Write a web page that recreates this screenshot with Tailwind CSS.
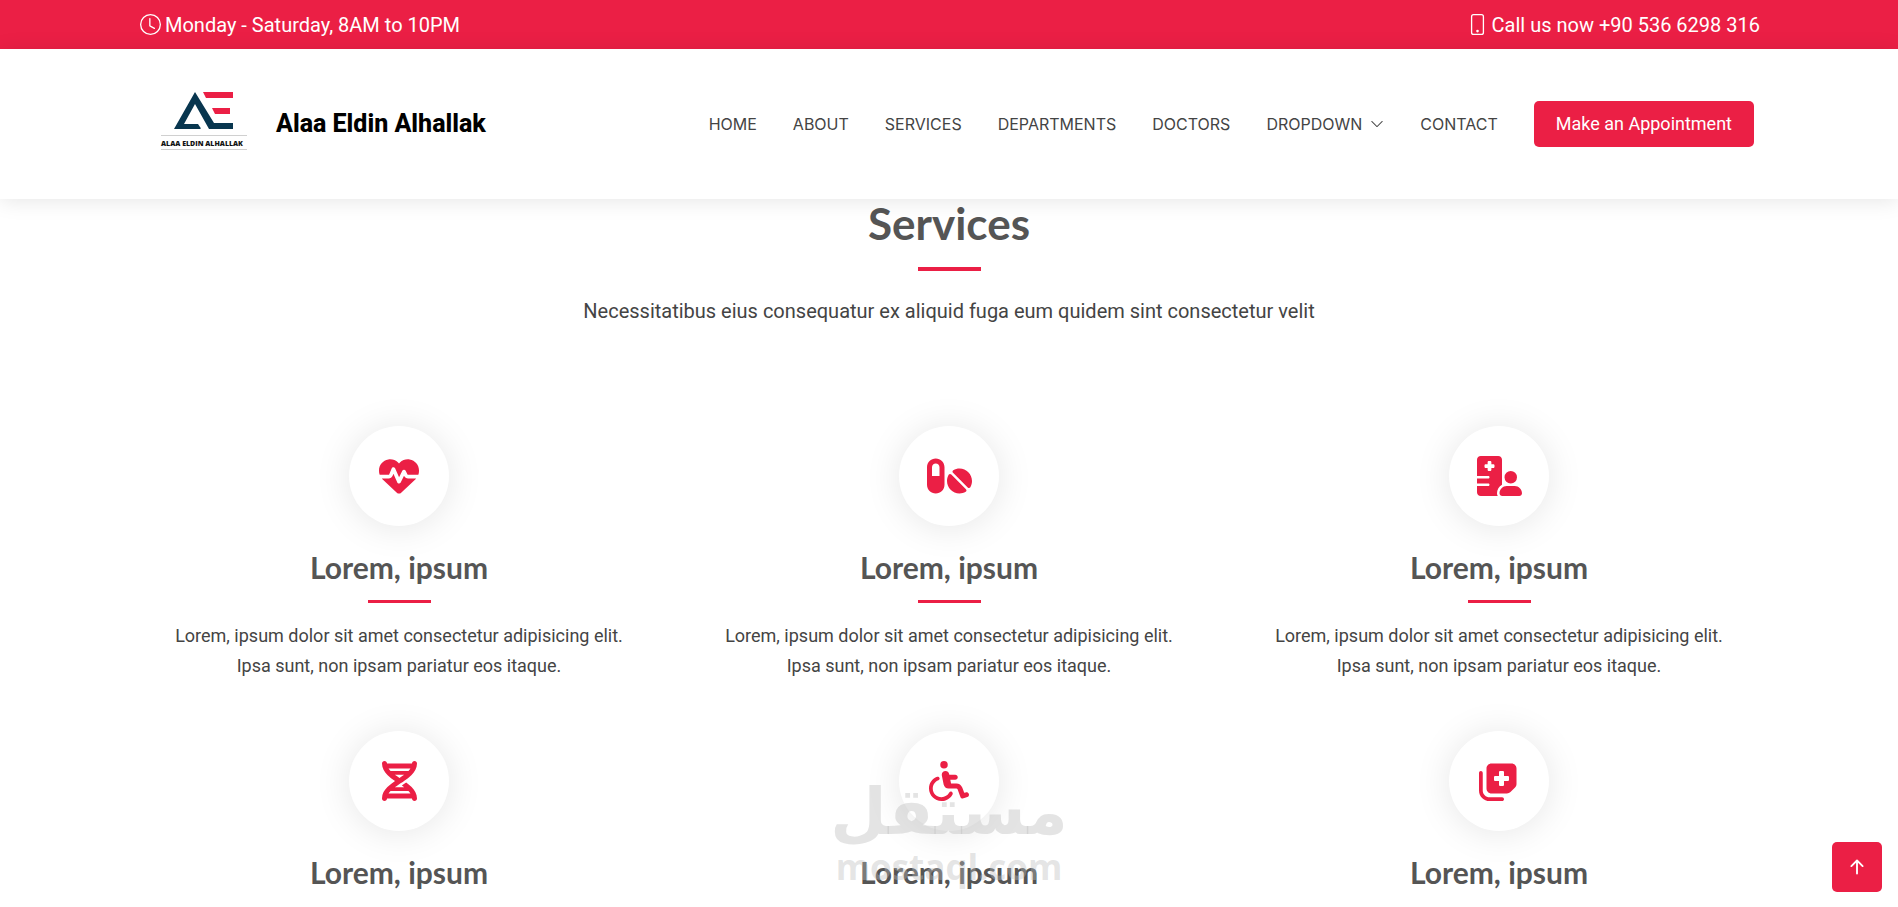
<!DOCTYPE html>
<html lang="en">
<head>
  <meta charset="UTF-8" />
  <title>Alaa Eldin Alhallak</title>
  <meta name="viewport" content="width=device-width, initial-scale=1.0" />
  <script src="https://cdn.jsdelivr.net/npm/@tailwindcss/browser@4"></script>
</head>
<body class="relative h-screen overflow-hidden bg-white font-['Roboto',sans-serif] text-[#444444]">

  <!-- Top bar -->
  <div class="bg-[#eb1f45] text-white text-xl">
    <div class="max-w-[1650px] mx-auto pl-4 pr-[14px] h-[49px] flex items-center justify-between">
      <div class="flex items-center gap-1">
        <svg class="size-[21px]" viewBox="0 0 16 16" fill="currentColor"><path d="M8 3.5a.5.5 0 0 0-1 0V9a.5.5 0 0 0 .252.434l3.5 2a.5.5 0 0 0 .496-.868L8 8.71z"/><path d="M8 16A8 8 0 1 0 8 0a8 8 0 0 0 0 16m7-8A7 7 0 1 1 1 8a7 7 0 0 1 14 0"/></svg>
        <span>Monday - Saturday, 8AM to 10PM</span>
      </div>
      <div class="flex items-center gap-1">
        <svg class="size-[21px]" viewBox="0 0 16 16" fill="currentColor"><path d="M11 1a1 1 0 0 1 1 1v12a1 1 0 0 1-1 1H5a1 1 0 0 1-1-1V2a1 1 0 0 1 1-1zM5 0a2 2 0 0 0-2 2v12a2 2 0 0 0 2 2h6a2 2 0 0 0 2-2V2a2 2 0 0 0-2-2z"/><path d="M8 14a1 1 0 1 0 0-2 1 1 0 0 0 0 2"/></svg>
        <span>Call us now +90 536 6298 316</span>
      </div>
    </div>
  </div>

  <!-- Header -->
  <header class="relative z-10 bg-white shadow-[0_2px_20px_rgba(0,0,0,0.1)]">
    <div class="max-w-[1650px] mx-auto pl-9 pr-5 h-[150px] flex items-center justify-between">
      <a href="#" class="flex items-center gap-7">
        <svg class="w-[88px] h-[66px]" viewBox="0 0 88 66">
          <path fill="#08364f" d="M35 1L14 38h26c1 0 1-1 0-2l-2-3H24l11-20 14 25h24v-6H54z"/>
          <path fill="#eb1f45" d="M43 1h30v6H46zM52 17h18v6H55z"/>
          <path stroke="#d0d0d0" d="M1 44.5h86M1 58.5h86"/>
          <text x="1" y="55" font-family="Open Sans, sans-serif" font-weight="800" font-size="7" fill="#111111">ALAA ELDIN ALHALLAK</text>
        </svg>
        <h1 class="text-[25px] font-extrabold text-black">Alaa Eldin Alhallak</h1>
      </a>
      <nav class="flex items-center gap-9 font-['Inter',sans-serif] text-base">
        <a href="#">HOME</a>
        <a href="#">ABOUT</a>
        <a href="#">SERVICES</a>
        <a href="#">DEPARTMENTS</a>
        <a href="#">DOCTORS</a>
        <a href="#" class="flex items-center gap-2">DROPDOWN
          <svg class="size-[14px]" viewBox="0 0 16 16" fill="currentColor"><path d="M1.646 4.646a.5.5 0 0 1 .708 0L8 10.293l5.646-5.647a.5.5 0 0 1 .708.708l-6 6a.5.5 0 0 1-.708 0l-6-6a.5.5 0 0 1 0-.708"/></svg>
        </a>
        <a href="#">CONTACT</a>
        <a href="#" class="bg-[#eb1f45] text-white rounded-[5px] px-[22px] h-[46px] flex items-center font-['Roboto',sans-serif] text-lg">Make an Appointment</a>
      </nav>
    </div>
  </header>

  <!-- Services -->
  <main class="max-w-[1650px] mx-auto text-center">
    <h2 class="text-[44px] leading-12 font-bold text-[#555555] font-['Lato',sans-serif]">Services</h2>
    <div class="w-[63px] h-1 mx-auto mt-5 bg-[#eb1f45]"></div>
    <p class="mt-[25px] text-xl leading-[30px]">Necessitatibus eius consequatur ex aliquid fuga eum quidem sint consectetur velit</p>

    <div class="mt-[100px] grid grid-cols-3 gap-y-[50px]">
      <section>
        <div class="size-[100px] mx-auto rounded-full bg-white shadow-[0_2px_36px_rgba(0,0,0,0.1)] flex items-center justify-center text-[#eb1f45]">
          <svg class="h-10" viewBox="0 0 512 512" fill="currentColor"><path d="M228.3 469.1L47.6 300.4c-4.2-3.9-8.2-8.1-11.9-12.4h87c22.6 0 43-13.6 51.7-34.5l10.5-25.2 49.3 109.5c3.8 8.5 12.1 14 21.4 14.1s17.8-5 22-13.3L320 253.7l1.7 3.4c9.5 19 28.9 31 50.1 31H476.3c-3.7 4.3-7.7 8.5-11.9 12.4L283.7 469.1c-7.5 7-17.4 10.9-27.7 10.9s-20.2-3.9-27.7-10.9zM503.7 240h-132c-3 0-5.8-1.7-7.2-4.4l-23.2-46.3c-4.1-8.1-12.4-13.3-21.5-13.3s-17.4 5.1-21.5 13.3l-41.4 82.8L205.9 158.2c-3.9-8.7-12.7-14.3-22.2-14.1s-18.1 5.9-21.8 14.8l-31.8 76.3c-1.2 3-4.2 4.9-7.4 4.9H16c-2.6 0-5 .4-7.3 1.1C3 225.2 0 208.2 0 190.9v-5.8c0-69.9 50.5-129.5 119.4-141C165 36.5 211.4 51.4 244 84l12 12 12-12c32.6-32.6 79-47.5 124.6-39.9C461.5 55.6 512 115.2 512 185.1v5.8c0 16.9-2.8 33.5-8.3 49.1z"/></svg>
        </div>
        <h3 class="mt-[23px] text-3xl/9 font-bold text-[#555555] font-['Lato',sans-serif]">Lorem, ipsum</h3>
        <div class="w-[63px] h-[3px] mx-auto mt-[15px] bg-[#eb1f45]"></div>
        <p class="mt-[18px] text-lg leading-[30px]">Lorem, ipsum dolor sit amet consectetur adipisicing elit.<br />Ipsa sunt, non ipsam pariatur eos itaque.</p>
      </section>

      <section>
        <div class="size-[100px] mx-auto rounded-full bg-white shadow-[0_2px_36px_rgba(0,0,0,0.1)] flex items-center justify-center text-[#eb1f45]">
          <svg class="h-10" viewBox="0 0 576 512" fill="currentColor"><path d="M112 96c-26.5 0-48 21.5-48 48l0 112 96 0 0-112c0-26.5-21.5-48-48-48zM0 144C0 82.1 50.1 32 112 32s112 50.1 112 112l0 224c0 61.9-50.1 112-112 112S0 429.9 0 368L0 144zM554.9 399.4c-7.1 12.3-23.7 13.1-33.8 3.1L333.5 214.9c-10-10-9.3-26.7 3.1-33.8C360 167.7 387.1 160 416 160c88.4 0 160 71.6 160 160c0 28.9-7.7 56-21.1 79.4zm-59.5 59.5C472 472.3 444.9 480 416 480c-88.4 0-160-71.6-160-160c0-28.9 7.7-56 21.1-79.4c7.1-12.3 23.7-13.1 33.8-3.1L498.5 425.1c10 10 9.3 26.7-3.1 33.8z"/></svg>
        </div>
        <h3 class="mt-[23px] text-3xl/9 font-bold text-[#555555] font-['Lato',sans-serif]">Lorem, ipsum</h3>
        <div class="w-[63px] h-[3px] mx-auto mt-[15px] bg-[#eb1f45]"></div>
        <p class="mt-[18px] text-lg leading-[30px]">Lorem, ipsum dolor sit amet consectetur adipisicing elit.<br />Ipsa sunt, non ipsam pariatur eos itaque.</p>
      </section>

      <section>
        <div class="size-[100px] mx-auto rounded-full bg-white shadow-[0_2px_36px_rgba(0,0,0,0.1)] flex items-center justify-center text-[#eb1f45]">
          <svg class="h-10" viewBox="0 0 576 512" fill="currentColor"><path d="M48 0C21.5 0 0 21.5 0 48V256H144c8.8 0 16 7.2 16 16s-7.2 16-16 16H0v64H144c8.8 0 16 7.2 16 16s-7.2 16-16 16H0v80c0 26.5 21.5 48 48 48H265.9c-6.3-10.2-9.9-22.2-9.9-35.1c0-46.9 25.8-87.8 64-109.2V271.8 48c0-26.5-21.5-48-48-48H48zM152 64h16c8.8 0 16 7.2 16 16v24h24c8.8 0 16 7.2 16 16v16c0 8.8-7.2 16-16 16H184v24c0 8.8-7.2 16-16 16H152c-8.8 0-16-7.2-16-16V152H112c-8.8 0-16-7.2-16-16V120c0-8.8 7.2-16 16-16h24V80c0-8.8 7.2-16 16-16zM512 272a80 80 0 1 0 -160 0 80 80 0 1 0 160 0zM288 477.1c0 19.3 15.6 34.9 34.9 34.9H541.1c19.3 0 34.9-15.6 34.9-34.9c0-51.4-41.7-93.1-93.1-93.1H381.1c-51.4 0-93.1 41.7-93.1 93.1z"/></svg>
        </div>
        <h3 class="mt-[23px] text-3xl/9 font-bold text-[#555555] font-['Lato',sans-serif]">Lorem, ipsum</h3>
        <div class="w-[63px] h-[3px] mx-auto mt-[15px] bg-[#eb1f45]"></div>
        <p class="mt-[18px] text-lg leading-[30px]">Lorem, ipsum dolor sit amet consectetur adipisicing elit.<br />Ipsa sunt, non ipsam pariatur eos itaque.</p>
      </section>

      <section>
        <div class="size-[100px] mx-auto rounded-full bg-white shadow-[0_2px_36px_rgba(0,0,0,0.1)] flex items-center justify-center text-[#eb1f45]">
          <svg class="h-10" viewBox="0 0 448 512" fill="currentColor"><path d="M416 0c17.7 0 32 14.3 32 32c0 59.8-30.3 107.5-69.4 146.6c-28 28-62.5 53.5-97.3 77.4l-2.5 1.7c-11.9 8.1-23.8 16.1-35.5 23.9l-1.6 1c-6 4-11.9 7.9-17.8 11.9c-20.9 14-40.8 27.7-59.3 41.5H283.3c-9.8-7.4-20.1-14.7-30.7-22.1l7-4.7 3-2c15.1-10.1 30.9-20.6 46.7-31.6c25 18.1 48.9 37.3 69.4 57.7C417.7 372.5 448 420.2 448 480c0 17.7-14.3 32-32 32s-32-14.3-32-32H64c0 17.7-14.3 32-32 32s-32-14.3-32-32c0-59.8 30.3-107.5 69.4-146.6c28-28 62.5-53.5 97.3-77.4c-34.8-23.9-69.3-49.3-97.3-77.4C30.3 139.5 0 91.8 0 32C0 14.3 14.3 0 32 0S64 14.3 64 32H384c0-17.7 14.3-32 32-32zM338.6 384H109.4c-10.1 10.6-18.6 21.3-25.5 32H364.1c-6.8-10.7-15.3-21.4-25.5-32zM109.4 128H338.6c10.1-10.7 18.6-21.3 25.5-32H83.9c6.8 10.7 15.3 21.3 25.5 32zm55.4 48c18.4 13.8 38.4 27.5 59.3 41.5c20.9-14 40.8-27.7 59.3-41.5H164.8z"/></svg>
        </div>
        <h3 class="mt-[23px] text-3xl/9 font-bold text-[#555555] font-['Lato',sans-serif]">Lorem, ipsum</h3>
      </section>

      <section>
        <div class="size-[100px] mx-auto rounded-full bg-white shadow-[0_2px_36px_rgba(0,0,0,0.1)] flex items-center justify-center text-[#eb1f45]">
          <svg class="h-10" viewBox="0 0 512 512" fill="currentColor"><path d="M192 96a48 48 0 1 0 0-96 48 48 0 1 0 0 96zM120.5 247.2c12.4-4.7 18.7-18.5 14-30.9s-18.5-18.7-30.9-14C43.1 225.1 0 283.5 0 352c0 88.4 71.6 160 160 160c61.2 0 114.3-34.3 141.2-84.7c6.2-11.7 1.8-26.2-9.9-32.5s-26.2-1.8-32.5 9.9C240 440 202.8 464 160 464C98.1 464 48 413.9 48 352c0-47.9 30.1-88.8 72.5-104.8zM259.8 176l-1.9-9.7c-4.5-22.3-24-38.3-46.8-38.3c-30.1 0-52.7 27.5-46.8 57l23.1 115.5c6 29.9 32.2 51.4 62.8 51.4h5.1c.4 0 .8 0 1.3 0h94.1c6.7 0 12.6 4.1 15 10.4L402 459.2c6 16.1 23.8 24.6 40.1 19.1l48-16c16.8-5.6 25.8-23.7 20.2-40.5s-23.7-25.8-40.5-20.2l-18.7 6.2-25.5-68c-11.7-31.2-41.6-51.9-74.9-51.9H282.2l-9.6-48H336c17.7 0 32-14.3 32-32s-14.3-32-32-32H259.8z"/></svg>
        </div>
        <h3 class="mt-[23px] text-3xl/9 font-bold text-[#555555] font-['Lato',sans-serif]">Lorem, ipsum</h3>
      </section>

      <section>
        <div class="size-[100px] mx-auto rounded-full bg-white shadow-[0_2px_36px_rgba(0,0,0,0.1)] flex items-center justify-center text-[#eb1f45]">
          <svg class="h-10" viewBox="0 0 512 512" fill="currentColor"><path d="M96 352V96c0-35.3 28.7-64 64-64H416c35.3 0 64 28.7 64 64V293.5c0 17-6.7 33.3-18.7 45.3l-58.5 58.5c-12 12-28.3 18.7-45.3 18.7H160c-35.3 0-64-28.7-64-64zM272 128c-8.8 0-16 7.2-16 16v48H208c-8.8 0-16 7.2-16 16v32c0 8.8 7.2 16 16 16h48v48c0 8.8 7.2 16 16 16h32c8.8 0 16-7.2 16-16V256h48c8.8 0 16-7.2 16-16V208c0-8.8-7.2-16-16-16H320V144c0-8.8-7.2-16-16-16H272zm24 336c13.3 0 24 10.7 24 24s-10.7 24-24 24H136C60.9 512 0 451.1 0 376V152c0-13.3 10.7-24 24-24s24 10.7 24 24l0 224c0 48.6 39.4 88 88 88H296z"/></svg>
        </div>
        <h3 class="mt-[23px] text-3xl/9 font-bold text-[#555555] font-['Lato',sans-serif]">Lorem, ipsum</h3>
      </section>
    </div>
  </main>

  <!-- Watermark -->
  <div class="absolute bottom-5 left-1/2 -translate-x-1/2 text-center font-bold text-[#bbbbbb]/40 pointer-events-none">
    <div lang="ar" dir="rtl" class="font-['DejaVu_Sans',sans-serif] text-[65px] leading-[70px]">مستقل</div>
    <div class="font-['Open_Sans',sans-serif] text-[35px] leading-10">mostaql.com</div>
  </div>

  <!-- Back to top -->
  <button aria-label="Back to top" class="fixed right-4 bottom-[15px] size-[50px] rounded-[5px] bg-[#eb1f45] text-white flex items-center justify-center">
    <svg class="size-[30px]" viewBox="0 0 16 16" fill="currentColor"><path d="M8 12a.5.5 0 0 0 .5-.5V5.707l2.146 2.147a.5.5 0 0 0 .708-.708l-3-3a.5.5 0 0 0-.708 0l-3 3a.5.5 0 1 0 .708.708L7.5 5.707V11.5a.5.5 0 0 0 .5.5"/></svg>
  </button>
</body>
</html>
